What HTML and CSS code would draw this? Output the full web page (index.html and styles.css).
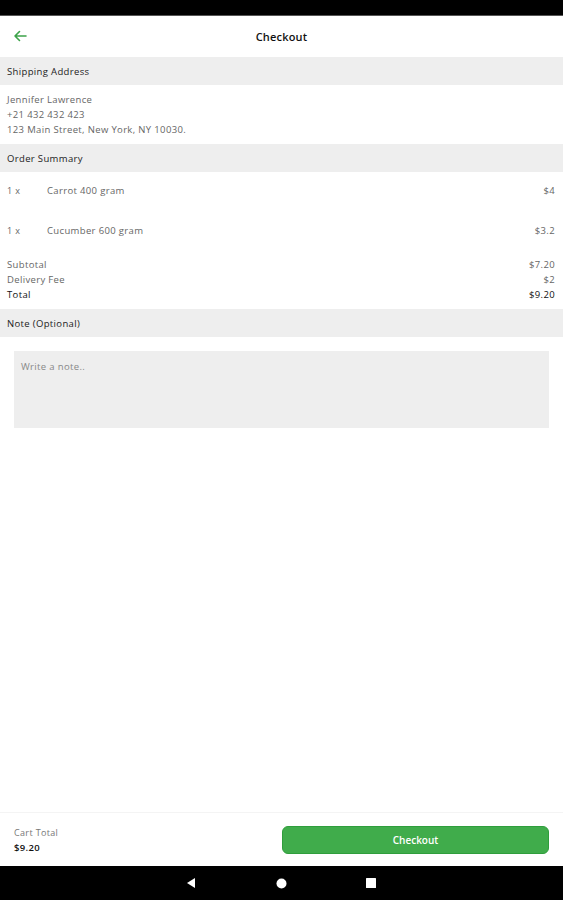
FILE: index.html
```html
<!DOCTYPE html>
<html lang="en">
<head>
<meta charset="utf-8">
<title>Checkout</title>
<link rel="stylesheet" href="styles.css">
</head>
<body>
<div class="screen">
  <div class="statusbar"></div>
  <header class="appbar">
    <svg class="back" width="14" height="12" viewBox="0 0 14 12"><path d="M13 6H2M6.5 1.5L2 6l4.5 4.5" fill="none" stroke="#3da34a" stroke-width="1.6" stroke-linecap="round" stroke-linejoin="round"/></svg>
    <h1 class="title">Checkout</h1>
  </header>

  <div class="sect-head">Shipping Address</div>
  <div class="address">
    <div>Jennifer Lawrence</div>
    <div>+21 432 432 423</div>
    <div>123 Main Street, New York, NY 10030.</div>
  </div>

  <div class="sect-head">Order Summary</div>
  <div class="summary">
    <div class="item"><span class="qty">1 x</span><span class="name">Carrot 400 gram</span><span class="price">$4</span></div>
    <div class="item"><span class="qty">1 x</span><span class="name">Cucumber 600 gram</span><span class="price">$3.2</span></div>
    <div class="totals">
      <div class="trow"><span>Subtotal</span><span>$7.20</span></div>
      <div class="trow"><span>Delivery Fee</span><span>$2</span></div>
      <div class="trow total"><span>Total</span><span>$9.20</span></div>
    </div>
  </div>

  <div class="sect-head">Note (Optional)</div>
  <div class="note-wrap">
    <div class="note">Write a note..</div>
  </div>

  <div class="spacer"></div>

  <footer class="bottombar">
    <div class="cart">
      <div class="cart-label">Cart Total</div>
      <div class="cart-value">$9.20</div>
    </div>
    <button class="checkout-btn">Checkout</button>
  </footer>

  <nav class="navbar">
    <svg width="12" height="12" viewBox="0 0 12 12"><path d="M10 1v10L2 6z" fill="#fff"/></svg>
    <svg width="11" height="11" viewBox="0 0 11 11"><circle cx="5.5" cy="5.5" r="5" fill="#fff"/></svg>
    <svg width="10" height="10" viewBox="0 0 10 10"><rect x="0" y="0" width="10" height="10" rx="0.5" fill="#fff"/></svg>
  </nav>
</div>
</body>
</html>
```

FILE: styles.css
```css
* { box-sizing: border-box; }
html, body { margin: 0; padding: 0; }
body {
  font-family: "Open Sans", "Noto Sans", sans-serif;
  color: #222;
  background: #fff;
  letter-spacing: 0.35px;
}
.screen {
  width: 563px;
  height: 900px;
  display: flex;
  flex-direction: column;
}
.statusbar {
  height: 16px;
  background: #000;
  border-bottom: 1px solid #555;
}
.appbar {
  height: 41px;
  position: relative;
  display: flex;
  align-items: center;
  justify-content: center;
}
.back {
  position: absolute;
  left: 13px;
  top: 14px;
}
.title {
  margin: 0;
  font-size: 11px;
  font-weight: 600;
  color: #111;
  letter-spacing: 0.2px;
}
.sect-head {
  height: 28px;
  background: #eeeeee;
  padding-left: 7px;
  font-size: 9.5px;
  font-weight: 500;
  color: #222;
  display: flex;
  align-items: center;
}
.address {
  padding: 7px 7px;
  font-size: 9.5px;
  line-height: 15px;
  color: #666;
}
.summary {
  padding: 11px 8px 7px 7px;
  font-size: 9.5px;
  color: #666;
}
.item {
  display: flex;
  line-height: 15px;
  margin-bottom: 25px;
}
.item:nth-child(2) { margin-bottom: 19px; }
.qty { width: 40px; font-size: 9px; }
.name { flex: 1; }
.price { text-align: right; }
.trow {
  display: flex;
  justify-content: space-between;
  line-height: 15px;
}
.trow.total {
  color: #111;
  font-weight: 500;
}
.note-wrap {
  padding: 14px 14px 0;
}
.note {
  height: 77px;
  background: #eeeeee;
  padding: 9px 7px;
  font-size: 9.5px;
  color: #888;
}
.spacer { flex: 1; }
.bottombar {
  height: 54px;
  border-top: 1px solid #f4f4f4;
  display: flex;
  align-items: center;
  justify-content: space-between;
  padding: 0 14px 0 14px;
}
.cart-label {
  font-size: 9px;
  color: #777;
  line-height: 15px;
}
.cart-value {
  font-size: 9.5px;
  font-weight: 600;
  color: #111;
  line-height: 15px;
}
.checkout-btn {
  width: 267px;
  height: 28px;
  margin-top: 1px;
  background: #40ac4b;
  border: 1px solid #2f9e3c;
  border-radius: 6px;
  color: #fff;
  font-family: "Open Sans", sans-serif;
  font-size: 10px;
  font-weight: 600;
}
.navbar {
  height: 34px;
  background: #000;
  display: flex;
  align-items: center;
  justify-content: center;
  gap: 79px;
  padding-right: 2px;
}
```
